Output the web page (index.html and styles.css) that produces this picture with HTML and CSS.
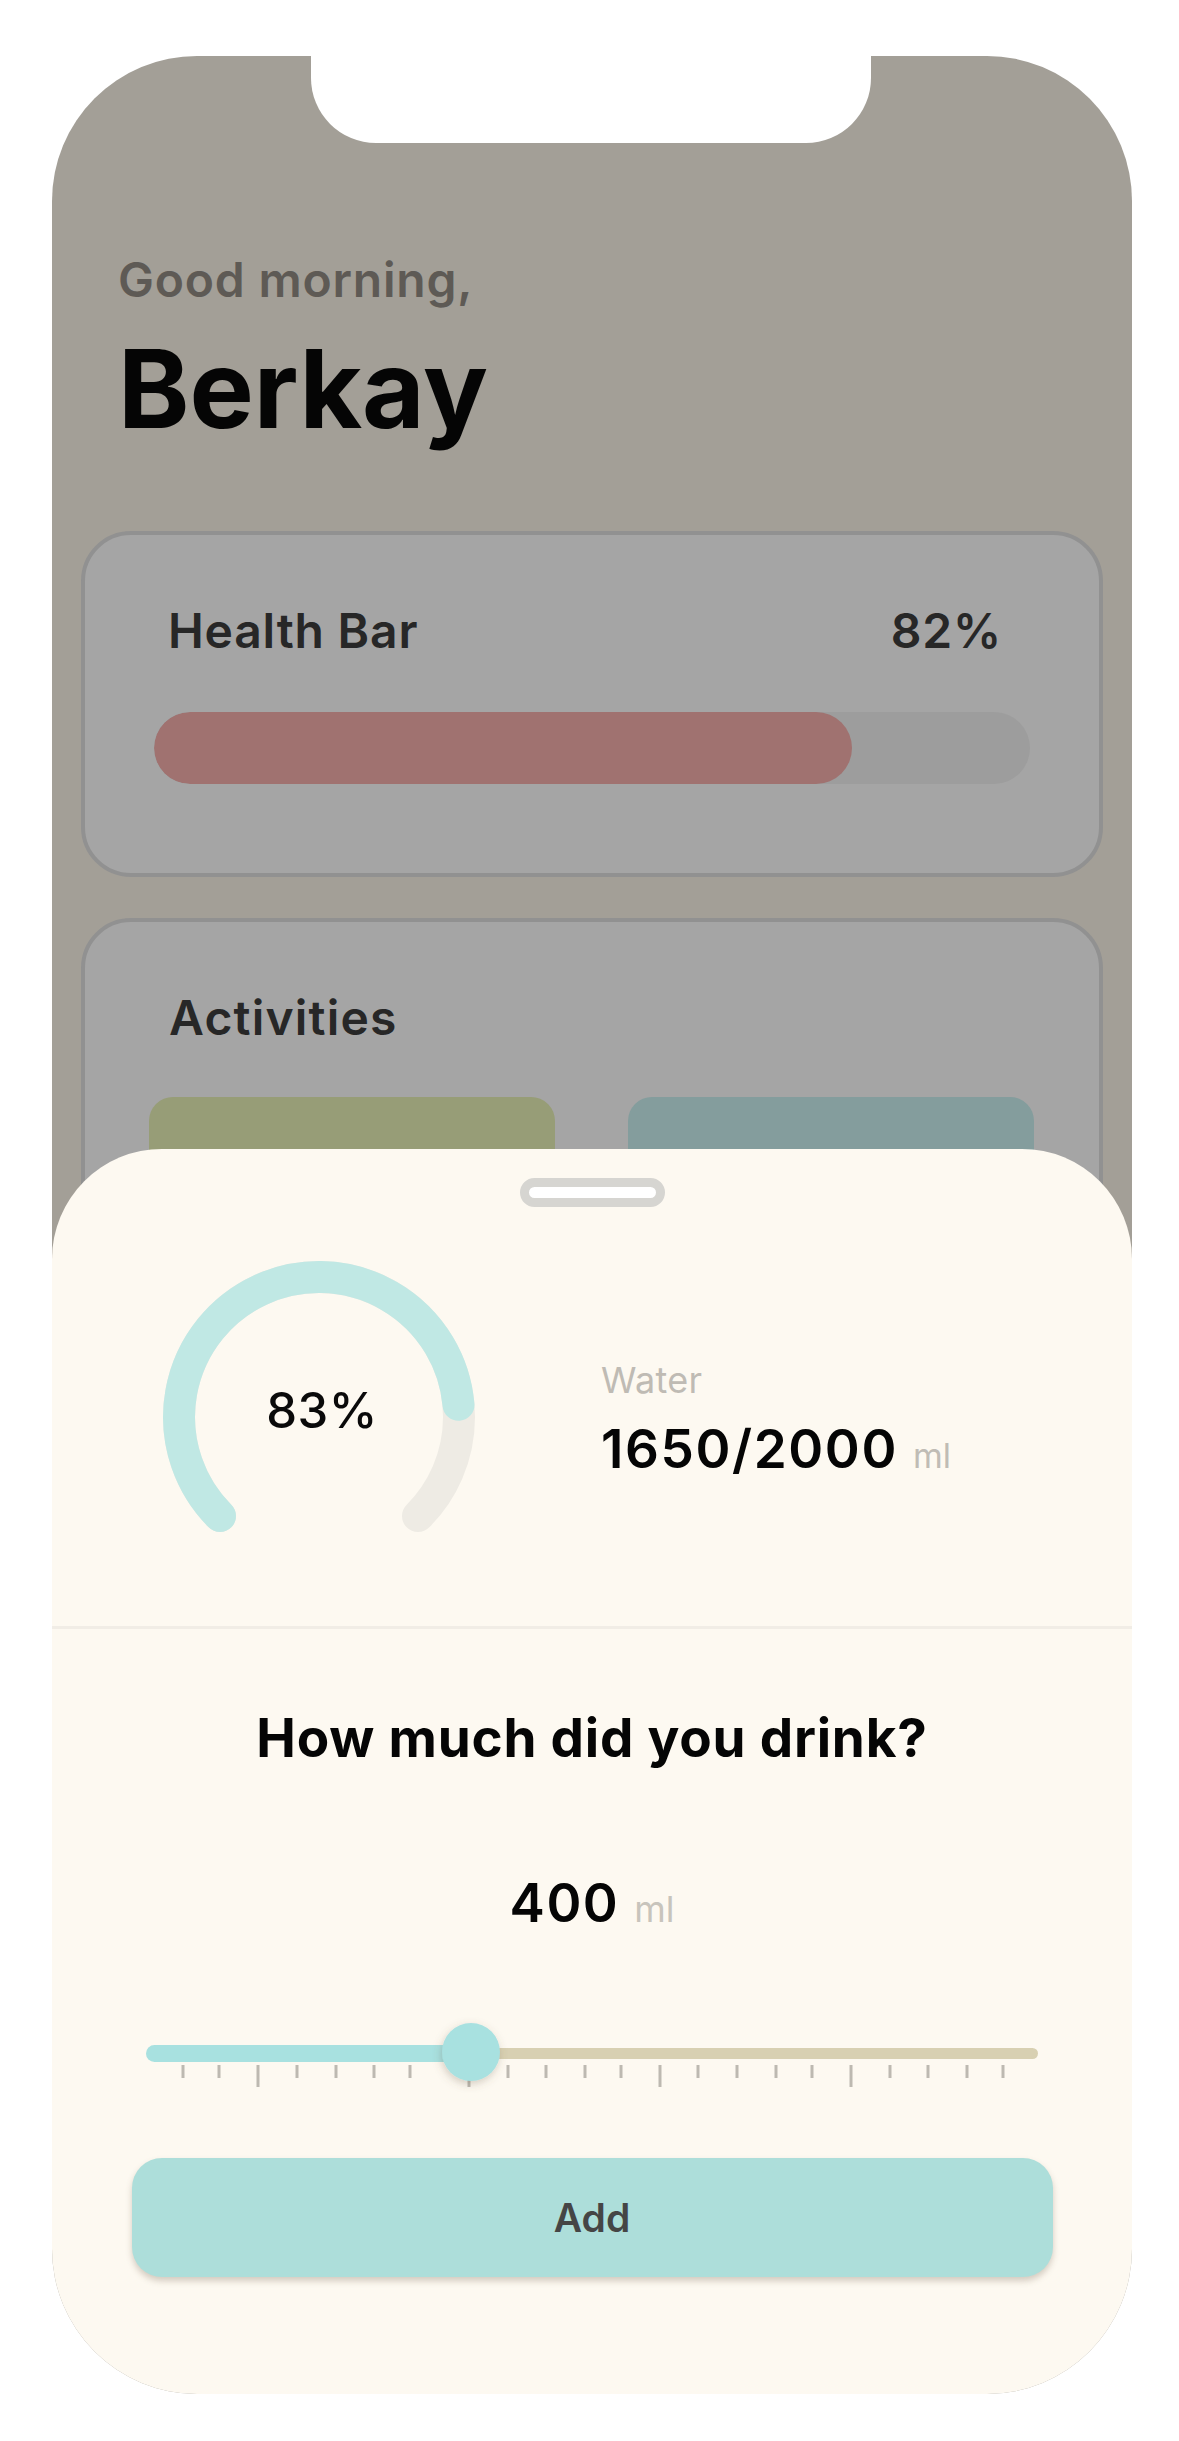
FILE: index.html
```html
<!DOCTYPE html>
<html lang="en">
<head>
<meta charset="utf-8">
<title>Water</title>
<link rel="stylesheet" href="styles.css">
</head>
<body>
<div class="phone">
  <div class="notch"></div>
  <main class="home">
    <header class="greeting">
      <p class="hello">Good morning,</p>
      <h1 class="name">Berkay</h1>
    </header>
    <section class="card health">
      <div class="card-head"><span>Health Bar</span><span>82%</span></div>
      <div class="bar"><div class="bar-fill" style="width:79.7%"></div></div>
    </section>
    <section class="card activities">
      <div class="card-head"><span>Activities</span></div>
      <div class="tiles">
        <div class="tile olive"></div>
        <div class="tile teal"></div>
      </div>
    </section>
  </main>

  <section class="sheet">
    <div class="handle"></div>
    <div class="summary">
      <div class="gauge">
        <svg class="gauge-ring" viewBox="0 0 320 320" width="320" height="320">
          <path d="M 61 259 A 140 140 0 1 1 259 259" fill="none" stroke="#eeebe4" stroke-width="32" stroke-linecap="round"/>
          <path d="M 61 259 A 140 140 0 1 1 299.5 147.8" fill="none" stroke="#c0e8e4" stroke-width="32" stroke-linecap="round"/>
        </svg>
        <span class="gauge-value">83%</span>
      </div>
      <div class="water">
        <span class="water-label">Water</span>
        <span class="water-amount">1650/2000 <small>ml</small></span>
      </div>
    </div>
    <div class="divider"></div>
    <h2 class="question">How much did you drink?</h2>
    <p class="amount">400 <small>ml</small></p>
    <svg class="slider" viewBox="0 0 892 80" width="892" height="80">
      <defs>
        <filter id="thumbShadow" x="-60%" y="-60%" width="220%" height="220%">
          <feDropShadow dx="-1" dy="3" stdDeviation="4" flood-color="#6b5a40" flood-opacity="0.28"/>
        </filter>
      </defs>
      <rect x="320" y="31" width="572" height="11" rx="5.5" fill="#d8d0b2"/>
      <rect x="0" y="28" width="340" height="17" rx="8.5" fill="#a8e1e0"/>
      <g stroke="#bdb9b1" stroke-width="3">
        <line x1="37" y1="48" x2="37" y2="61"/>
        <line x1="73" y1="48" x2="73" y2="61"/>
        <line x1="112" y1="48" x2="112" y2="70"/>
        <line x1="151" y1="48" x2="151" y2="61"/>
        <line x1="190" y1="48" x2="190" y2="61"/>
        <line x1="228" y1="48" x2="228" y2="61"/>
        <line x1="264" y1="48" x2="264" y2="61"/>
        <line x1="323" y1="48" x2="323" y2="70"/>
        <line x1="362" y1="48" x2="362" y2="61"/>
        <line x1="400" y1="48" x2="400" y2="61"/>
        <line x1="439" y1="48" x2="439" y2="61"/>
        <line x1="475" y1="48" x2="475" y2="61"/>
        <line x1="514" y1="48" x2="514" y2="70"/>
        <line x1="552" y1="48" x2="552" y2="61"/>
        <line x1="591" y1="48" x2="591" y2="61"/>
        <line x1="630" y1="48" x2="630" y2="61"/>
        <line x1="666" y1="48" x2="666" y2="61"/>
        <line x1="705" y1="48" x2="705" y2="70"/>
        <line x1="744" y1="48" x2="744" y2="61"/>
        <line x1="782" y1="48" x2="782" y2="61"/>
        <line x1="821" y1="48" x2="821" y2="61"/>
        <line x1="857" y1="48" x2="857" y2="61"/>
      </g>
      <circle cx="325" cy="35" r="29" fill="#a8e1e0" filter="url(#thumbShadow)"/>
    </svg>
    <button class="add" type="button">Add</button>
  </section>
</div>
</body>
</html>
```

FILE: styles.css
```css
* {
  box-sizing: border-box;
}

html, body {
  margin: 0;
  background: #ffffff;
}

body {
  padding: 56px 0 0 52px;
  font-family: Inter, "Noto Sans", "Liberation Sans", sans-serif;
}

.phone {
  position: relative;
  width: 1080px;
  height: 2338px;
  background: #a39f97;
  border-radius: 145px;
  overflow: hidden;
}

.notch {
  position: absolute;
  top: 0;
  left: 259px;
  width: 560px;
  height: 87px;
  background: #ffffff;
  border-radius: 0 0 65px 65px;
}

.home {
  padding-top: 194.5px;
}

.greeting {
  padding-left: 66px;
}

.hello {
  margin: 0;
  font-size: 48px;
  line-height: 58px;
  font-weight: 600;
  letter-spacing: 0.8px;
  color: #5e5a55;
}

.name {
  margin: 20px 0 0;
  font-size: 108px;
  line-height: 120px;
  font-weight: 700;
  color: #050505;
}

.card {
  margin: 0 29px;
  border: 4px solid #919191;
  border-radius: 50px;
  background: #a5a5a5;
}

.card-head {
  display: flex;
  justify-content: space-between;
  font-size: 48px;
  line-height: 58px;
  font-weight: 600;
  letter-spacing: 0.8px;
  color: #272727;
}

.health {
  margin-top: 82px;
  height: 346px;
  padding: 67.5px 69px 0;
}

.health .card-head {
  padding: 0 28px 0 14px;
}

.bar {
  margin-top: 51.5px;
  height: 72px;
  border-radius: 36px;
  background: #9d9d9d;
  overflow: hidden;
}

.bar-fill {
  height: 100%;
  border-radius: 36px;
  background: #a07270;
}

.activities {
  margin-top: 41px;
  height: 600px;
  padding: 67.5px 65px 0 64px;
}

.activities .card-head {
  padding-left: 20px;
  letter-spacing: 1.2px;
}

.tiles {
  display: flex;
  gap: 73px;
  margin-top: 49.5px;
}

.tile {
  flex: 1;
  height: 260px;
  border-radius: 24px;
}

.olive {
  background: #979d77;
}

.teal {
  background: #849d9d;
}

.sheet {
  position: absolute;
  left: 0;
  right: 0;
  top: 1093px;
  bottom: 0;
  background: #fdf9f1;
  border-radius: 110px 110px 0 0;
}

.handle {
  width: 145px;
  height: 29px;
  margin: 29px auto 0;
  border: 9.5px solid #d6d5d1;
  border-radius: 15px;
  background: #ffffff;
}

.summary {
  display: flex;
  align-items: center;
  gap: 122px;
  height: 320px;
  margin-top: 50px;
  padding-left: 107px;
}

.gauge {
  display: grid;
  width: 320px;
  height: 320px;
}

.gauge-ring,
.gauge-value {
  grid-area: 1 / 1;
}

.gauge-value {
  place-self: center;
  margin: 0 0 14px 6px;
  font-size: 49px;
  font-weight: 500;
  letter-spacing: 0.5px;
  color: #0a0a0a;
}

.water {
  display: flex;
  flex-direction: column;
  gap: 15px;
  margin-top: 11px;
}

.water-label {
  font-size: 36px;
  line-height: 44px;
  font-weight: 400;
  letter-spacing: 0.3px;
  color: #bfbbb4;
}

.water-amount {
  font-size: 53px;
  line-height: 64px;
  font-weight: 600;
  letter-spacing: 1.6px;
  color: #050505;
}

.water-amount small,
.amount small {
  font-size: 34px;
  font-weight: 400;
  letter-spacing: 0;
  color: #c0bcb5;
}

.divider {
  height: 3px;
  margin-top: 49px;
  background: #f1ede6;
}

.question {
  margin: 76.5px 0 0;
  text-align: center;
  font-size: 53px;
  line-height: 64px;
  font-weight: 700;
  letter-spacing: 0.8px;
  color: #050505;
}

.amount {
  margin: 101px 0 0;
  text-align: center;
  font-size: 53px;
  line-height: 64px;
  font-weight: 600;
  letter-spacing: 1.5px;
  color: #050505;
}

.amount small {
  font-size: 36px;
  color: #c8c4bc;
}

.slider {
  display: block;
  margin: 76.5px auto 0;
}

.add {
  display: block;
  width: 921px;
  height: 119px;
  margin: 60.5px auto 0;
  border: none;
  border-radius: 30px;
  background: #addeda;
  box-shadow: 0 4px 6px rgba(90, 70, 50, 0.25);
  font-family: Inter, "Noto Sans", "Liberation Sans", sans-serif;
  font-size: 39px;
  font-weight: 600;
  color: #454545;
}
```
